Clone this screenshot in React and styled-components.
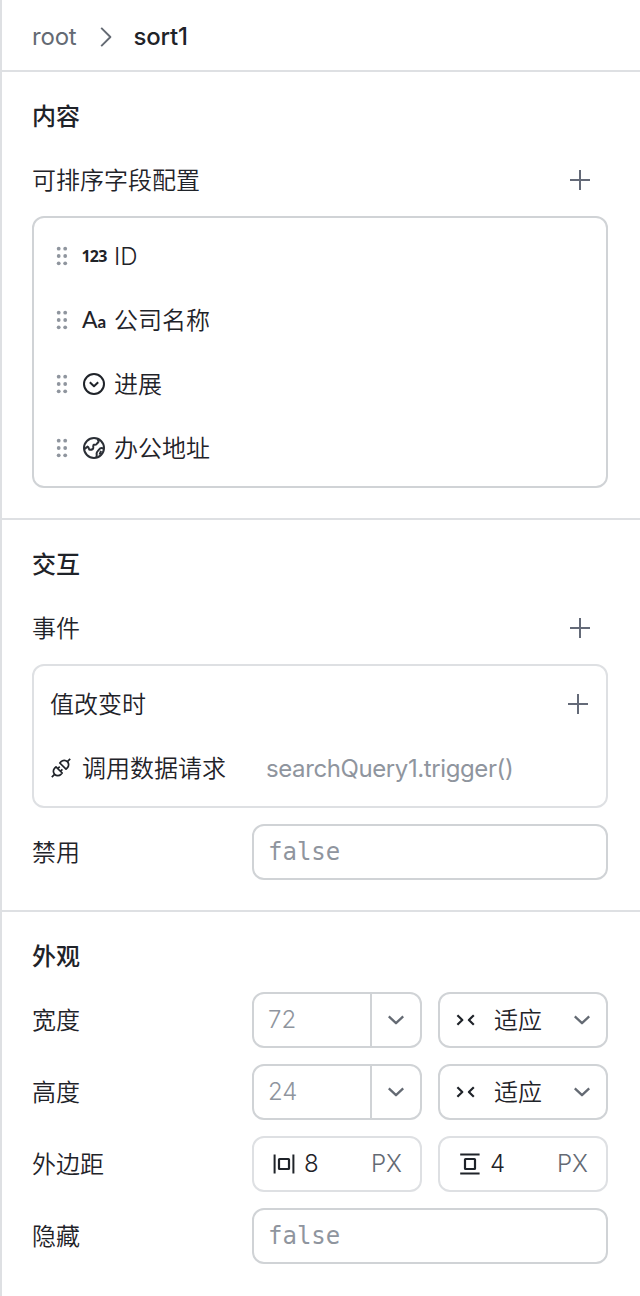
import React from 'react';
import styled, { createGlobalStyle } from 'styled-components';

const fields = [
    { type: 'number', name: 'ID' },
    { type: 'text', name: '公司名称' },
    { type: 'select', name: '进展' },
    { type: 'location', name: '办公地址' },
];

const sizes = [
    { label: '宽度', value: '72', mode: '适应' },
    { label: '高度', value: '24', mode: '适应' },
];

const PlusIcon = () => (
    <Icon width="20" height="20" viewBox="0 0 20 20" color="#646a78">
        <path d="M10 0v20M0 10h20" strokeWidth="2" />
    </Icon>
);

const ChevronIcon = () => (
    <Icon width="16" height="10" viewBox="0 0 16 10" color="#646a73">
        <path d="M.8 1.4 8 8.2l7.2-6.8" strokeWidth="2.3" />
    </Icon>
);

const CrumbIcon = () => (
    <Icon width="12" height="20" viewBox="0 0 12 20" color="#646a73">
        <path d="M1.2 .8 10.4 10l-9.2 9.2" strokeWidth="1.9" />
    </Icon>
);

const DragIcon = () => (
    <Icon width="12" height="20" viewBox="0 0 12 20">
        {[2.7, 10, 17.3].map((y) => (
            <g key={y} fill="#8f959e">
                <circle cx="2.7" cy={y} r="1.9" />
                <circle cx="9.2" cy={y} r="1.9" />
            </g>
        ))}
    </Icon>
);

const SelectIcon = () => (
    <Icon width="24" height="24" viewBox="0 0 24 24">
        <circle cx="12" cy="12" r="10" strokeWidth="2" />
        <path d="m7.8 10.2 4.2 4 4.2-4" strokeWidth="2" />
    </Icon>
);

const GlobeIcon = () => (
    <Icon width="24" height="24" viewBox="0 0 24 24" color="#2b2f36">
        <circle cx="12" cy="12" r="10" strokeWidth="2" />
        <path d="M2.2 13.2 5.6 10.6c1.6.6.8 3.2 2.4 3.2 1.4 0 3-.6 3.2-1.8.2-1.4-.4-2.8.6-3.2 1-.4 2.6.2 3-.9.4-1.2 1.6-1 1.8-2.2L15.6 2.8" strokeWidth="2" />
        <path d="M21.6 12.6c-1.8-1-3.8-.2-4.8 1.2-.8 1.2-2.2 2-2.2 3.6 0 1.2.6 2.6-.4 4M17.6 18.6l1.4-3.8" strokeWidth="2" />
    </Icon>
);

const PlugIcon = () => (
    <Icon width="20" height="20" viewBox="0 0 20 20">
        <path d="m.8 19.2 2.8-2.8M16.4 3.6 19.2.8" strokeWidth="1.7" />
        <path d="m5 8.8 6.2 6.2-1.3 1.3a4.3 4.3 0 0 1-6.2 0 4.3 4.3 0 0 1 0-6.2Z" strokeWidth="1.7" />
        <path d="M15 11.2 8.8 5l1.3-1.3a4.3 4.3 0 0 1 6.2 0 4.3 4.3 0 0 1 0 6.2Z" strokeWidth="1.7" />
        <path d="m6.9 10.5 1.8-1.8M9.6 13.2l1.8-1.8" strokeWidth="1.7" />
    </Icon>
);

const FitIcon = () => (
    <Icon width="20" height="12" viewBox="0 0 20 12">
        <path d="m1.4 1.2 4.9 4.8-4.9 4.8M17.8 1.2 12.9 6l4.9 4.8" strokeWidth="2.2" />
    </Icon>
);

const MarginXIcon = () => (
    <Icon width="24" height="24" viewBox="0 0 24 24">
        <path d="M2.6 2.4v19M21.4 2.4v19" strokeWidth="2" />
        <rect x="7" y="7" width="10" height="10" rx=".6" strokeWidth="2.2" />
    </Icon>
);

const MarginYIcon = () => (
    <Icon width="24" height="24" viewBox="0 0 24 24">
        <path d="M2.2 2.6h19.4M2.2 21.4h19.4" strokeWidth="2" />
        <rect x="7" y="7" width="10" height="10" rx=".6" strokeWidth="2.2" />
    </Icon>
);

const FieldType = ({ type }) => {
    switch (type) {
        case 'number':
            return <NumberMark>123</NumberMark>;
        case 'text':
            return <TextMark>A<small>a</small></TextMark>;
        case 'select':
            return <SelectIcon />;
        default:
            return <GlobeIcon />;
    }
};

function App() {
    return (
        <Panel>
            <GlobalStyle />
            <Header>
                <Crumb>root</Crumb>
                <CrumbIcon />
                <Crumb $active>sort1</Crumb>
            </Header>

            <Section>
                <Title>内容</Title>
                <HeadRow>
                    <Label>可排序字段配置</Label>
                    <PlusIcon />
                </HeadRow>
                <Box $strong>
                    {fields.map(({ type, name }) => (
                        <FieldRow key={name}>
                            <DragIcon />
                            <TypeSlot><FieldType type={type} /></TypeSlot>
                            <Label>{name}</Label>
                        </FieldRow>
                    ))}
                </Box>
            </Section>

            <Section>
                <Title>交互</Title>
                <HeadRow>
                    <Label>事件</Label>
                    <PlusIcon />
                </HeadRow>
                <Box>
                    <EventHead>
                        <Label>值改变时</Label>
                        <PlusIcon />
                    </EventHead>
                    <EventRow>
                        <PlugIcon />
                        <EventName>调用数据请求</EventName>
                        <EventAction>searchQuery1.trigger()</EventAction>
                    </EventRow>
                </Box>
                <FormRow $top={16}>
                    <Label>禁用</Label>
                    <CodeInput>false</CodeInput>
                </FormRow>
            </Section>

            <Section>
                <Title>外观</Title>
                <Form>
                    {sizes.map(({ label, value, mode }) => (
                        <FormRow key={label}>
                            <Label>{label}</Label>
                            <Pair>
                                <Control>
                                    <Placeholder>{value}</Placeholder>
                                    <UnitButton><ChevronIcon /></UnitButton>
                                </Control>
                                <Control>
                                    <ModeIcon><FitIcon /></ModeIcon>
                                    <Mode>{mode}</Mode>
                                    <ModeArrow><ChevronIcon /></ModeArrow>
                                </Control>
                            </Pair>
                        </FormRow>
                    ))}
                    <FormRow>
                        <Label>外边距</Label>
                        <Pair>
                            <Control $light>
                                <Spacing><MarginXIcon />8</Spacing>
                                <Unit>PX</Unit>
                            </Control>
                            <Control $light>
                                <Spacing><MarginYIcon />4</Spacing>
                                <Unit>PX</Unit>
                            </Control>
                        </Pair>
                    </FormRow>
                    <FormRow>
                        <Label>隐藏</Label>
                        <CodeInput>false</CodeInput>
                    </FormRow>
                </Form>
            </Section>
        </Panel>
    );
}

export default App;

const GlobalStyle = createGlobalStyle`
    * {
        box-sizing: border-box;
    }

    body {
        margin: 0;
        background: #fff;
    }
`;

const Icon = styled.svg.attrs({
    fill: 'none',
    stroke: 'currentColor',
    strokeLinejoin: 'round',
})`
    display: block;
    flex-shrink: 0;
    color: ${({ color }) => color || '#1f2329'};

    g {
        stroke: none;
    }
`;

const Panel = styled.div`
    height: 1296px;
    overflow: hidden;
    border-left: 2px solid #dee0e3;
    color: #1f2329;
    font-family: Inter, "Noto Sans CJK SC", sans-serif;
    font-size: 24px;
    font-weight: 350;
    line-height: 36px;
    white-space: nowrap;
`;

const Header = styled.div`
    display: flex;
    align-items: center;
    height: 72px;
    padding: 4px 30px 0;
    border-bottom: 2px solid #dee0e3;
`;

// CJK glyphs sit slightly high in the line box
const Label = styled.span`
    padding-top: 1px;
`;

const Crumb = styled.span`
    color: ${({ $active }) => ($active ? '#1f2329' : '#646a73')};
    font-weight: ${({ $active }) => ($active ? 500 : 400)};
    letter-spacing: -0.2px;

    & + svg {
        margin: 0 21px 0 24px;
    }
`;

const Section = styled.section`
    padding: 20px 32px 30px 30px;

    & + & {
        border-top: 2px solid #dee0e3;
    }
`;

const Title = styled.div`
    height: 48px;
    font-weight: 500;
    line-height: 49px;
`;

const HeadRow = styled.div`
    display: flex;
    align-items: center;
    justify-content: space-between;
    height: 40px;
    margin: 20px 0 16px;
    padding-right: 18px;
`;

const Box = styled.div`
    padding: 6px 18px 6px 16px;
    border: 2px solid ${({ $strong }) => ($strong ? '#d0d3d6' : '#dee0e3')};
    border-radius: 12px;
`;

const FieldRow = styled.div`
    display: flex;
    align-items: center;
    height: 64px;
    padding-left: 6px;
`;

const TypeSlot = styled.span`
    display: flex;
    justify-content: center;
    width: 28px;
    margin: 0 6px 0 12px;
`;

const NumberMark = styled.span`
    font-family: "Noto Sans", sans-serif;
    font-size: 16px;
    font-weight: 700;
    letter-spacing: -0.8px;
`;

const TextMark = styled.span`
    padding-top: 1px;
    font-family: Lato, sans-serif;
    font-size: 23px;
    font-weight: 400;

    small {
        font-size: 17px;
        font-weight: 700;
    }
`;

const EventHead = styled.div`
    display: flex;
    align-items: center;
    justify-content: space-between;
    height: 64px;
`;

const EventRow = styled.div`
    display: flex;
    align-items: center;
    height: 64px;
    padding-left: 1px;
`;

const EventName = styled(Label)`
    width: 195px;
    padding-left: 11px;
`;

const EventAction = styled(Label)`
    color: #8f959e;
    font-weight: 400;
    letter-spacing: -0.4px;
`;

const Form = styled.div`
    display: grid;
    gap: 16px;
    margin-top: 12px;
`;

const FormRow = styled.div`
    display: grid;
    grid-template-columns: 220px 1fr;
    align-items: center;
    height: 56px;
    margin-top: ${({ $top }) => $top || 0}px;
`;

const Pair = styled.div`
    display: grid;
    grid-template-columns: 1fr 1fr;
    gap: 16px;
`;

const Control = styled.div`
    display: flex;
    align-items: center;
    height: 56px;
    border: 2px solid ${({ $light }) => ($light ? '#dee0e3' : '#d0d3d6')};
    border-radius: 12px;
`;

const CodeInput = styled(Control)`
    padding-left: 14px;
    color: #8f959e;
    font-family: "DejaVu Sans Mono", monospace;
    font-weight: 400;
`;

const Placeholder = styled.span`
    flex: 1;
    padding-left: 14px;
    color: #8f959e;
`;

const UnitButton = styled.span`
    display: flex;
    align-items: center;
    justify-content: center;
    width: 50px;
    height: 52px;
    border-left: 2px solid #d0d3d6;
`;

const ModeIcon = styled.span`
    padding-left: 16px;
`;

const Mode = styled(Label)`
    flex: 1;
    padding-left: 18px;
`;

const ModeArrow = styled.span`
    padding-right: 16px;
`;

const Spacing = styled.span`
    display: flex;
    flex: 1;
    align-items: center;
    gap: 8px;
    padding-left: 18px;
`;

const Unit = styled.span`
    padding-right: 18px;
    color: #646a73;
`;
